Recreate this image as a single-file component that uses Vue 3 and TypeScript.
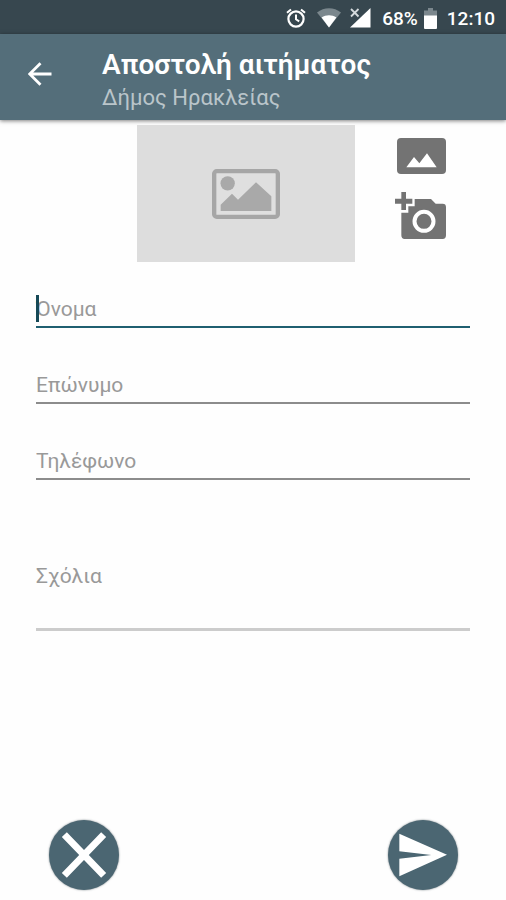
<script setup lang="ts">
import { ref } from 'vue'

interface Field {
  id: string
  label: string
  type: string
}

const fields: Field[] = [
  { id: 'first-name', label: 'Όνομα', type: 'text' },
  { id: 'last-name', label: 'Επώνυμο', type: 'text' },
  { id: 'phone', label: 'Τηλέφωνο', type: 'tel' },
]

const values = ref<Record<string, string>>({ 'first-name': '', 'last-name': '', phone: '' })
const comments = ref('')
const active = ref('first-name')
</script>

<template>
  <div class="screen">
    <div class="status">
      <svg class="alarm" viewBox="0 0 20 20" aria-hidden="true">
        <circle cx="10" cy="11" r="7.6" fill="none" stroke="#fff" stroke-width="2.2" />
        <path d="M10 6.5V11.3L13.2 13.3M1 4.8L5 1.4M19 4.8L15 1.4" fill="none" stroke="#fff" stroke-width="2" />
      </svg>
      <svg class="wifi" viewBox="0 0 24 20" aria-hidden="true">
        <path d="M0 4.5C7-1.2 17-1.2 24 4.5L12 19.5Z" fill="#7b878d" />
        <path d="M4.6 9.6C9 6.4 15 6.4 19.4 9.6L12 19.5Z" fill="#fff" />
      </svg>
      <svg class="signal" viewBox="0 0 21 20" aria-hidden="true">
        <path d="M20.5 0V19.5H0Z" fill="#fff" />
        <path d="M1 1L8.5 8.5M8.5 1L1 8.5" stroke="#37474f" stroke-width="5" />
        <path d="M1 1L8.5 8.5M8.5 1L1 8.5" stroke="#d5dadd" stroke-width="1.8" />
      </svg>
      <span class="percent">68%</span>
      <svg class="battery" viewBox="0 0 13 21" aria-hidden="true">
        <path d="M4 0H9V2.5H13V8H0V2.5H4Z" fill="#7b878d" />
        <path d="M0 7.5H13V20Q13 21 12 21H1Q0 21 0 20Z" fill="#fff" />
      </svg>
      <span class="clock">12:10</span>
    </div>

    <header class="bar">
      <button class="back" type="button" aria-label="Πίσω">
        <svg viewBox="0 0 24 24" aria-hidden="true">
          <path d="M23.5 12H2M12.5 1.2L1.7 12L12.5 22.8" fill="none" stroke="#fff" stroke-width="2.8" />
        </svg>
      </button>
      <div class="heading">
        <h1>Αποστολή αιτήματος</h1>
        <p>Δήμος Ηρακλείας</p>
      </div>
    </header>

    <form class="form" @submit.prevent>
      <div class="media">
        <div class="preview">
          <svg viewBox="0 0 204 150" aria-hidden="true">
            <rect x="6.5" y="6.5" width="191" height="137" rx="8" fill="#dfdfdf" stroke="#a6a6a6" stroke-width="13" />
            <circle cx="47" cy="43" r="21.5" fill="#a9a9a9" />
            <path d="M26 126V107L60 74L78 92L132 40L178 82V126Z" fill="#a9a9a9" />
          </svg>
        </div>
        <div class="sources">
          <button type="button" aria-label="Επιλογή εικόνας">
            <svg class="gallery" viewBox="0 0 147 108" aria-hidden="true">
              <rect width="147" height="108" rx="12" fill="#737373" />
              <path d="M28 88L51 57L67 76L90 46L119 88Z" fill="#fff" />
            </svg>
          </button>
          <button type="button" aria-label="Λήψη φωτογραφίας">
            <svg class="camera" viewBox="45 200 153 144" aria-hidden="true">
              <path d="M64 200H78V220H97V235H78V254H64V235H45V220H64Z" fill="#737373" />
              <path d="M64 262H85V243H104V221H153L167 235H188Q198 235 198 245V330Q198 341 188 341H74Q64 341 64 330Z" fill="#737373" />
              <circle cx="132" cy="288" r="28.5" fill="#737373" stroke="#fff" stroke-width="12" />
            </svg>
          </button>
        </div>
      </div>

      <div v-for="field in fields" :key="field.id" class="field" :class="{ active: active === field.id }">
        <input :id="field.id" v-model="values[field.id]" :type="field.type" @focus="active = field.id" />
        <label v-show="!values[field.id]" :for="field.id">{{ field.label }}</label>
        <span v-if="active === field.id && !values[field.id]" class="caret"></span>
      </div>

      <div class="field comments">
        <textarea id="comments" v-model="comments" rows="2" @focus="active = 'comments'"></textarea>
        <label v-show="!comments" for="comments">Σχόλια</label>
      </div>

      <div class="actions">
        <button class="round" type="button" aria-label="Ακύρωση">
          <svg viewBox="0 0 210 210" aria-hidden="true">
            <path d="M46 44L164 166M164 44L46 166" stroke="#fff" stroke-width="21" />
          </svg>
        </button>
        <button class="round" type="submit" aria-label="Αποστολή">
          <svg viewBox="0 0 210 210" aria-hidden="true">
            <path d="M34 41L177 104L34 169V116L130 105L34 94Z" fill="#fff" />
          </svg>
        </button>
      </div>
    </form>
  </div>
</template>

<style>
body {
  margin: 0;
  background: #fefefe;
}
</style>

<style scoped>
.screen {
  display: flex;
  flex-direction: column;
  min-height: 100vh;
  font-family: Roboto, "Noto Sans", sans-serif;
}

svg {
  display: block;
}

button {
  padding: 0;
  border: 0;
  background: none;
  cursor: pointer;
}

.status {
  display: flex;
  align-items: center;
  justify-content: flex-end;
  height: 34px;
  box-sizing: border-box;
  padding: 2px 11px 0 0;
  background: #37474f;
  color: #fff;
  font-size: 19px;
  font-weight: 500;
}

.alarm {
  width: 20px;
  height: 20px;
  margin-right: 11px;
}

.wifi {
  width: 24px;
  height: 20px;
  margin-right: 9px;
}

.signal {
  width: 21px;
  height: 20px;
  margin-right: 11px;
}

.percent {
  margin-right: 6px;
}

.battery {
  width: 13px;
  height: 21px;
  margin-right: 10px;
}

.bar {
  display: flex;
  height: 86px;
  background: #546e7a;
  box-shadow: 0 1px 4px rgba(0, 0, 0, 0.5);
}

.back {
  width: 80px;
  height: 80px;
  display: grid;
  place-items: center;
}

.back svg {
  width: 24px;
  height: 24px;
}

.heading {
  padding: 12px 0 0 22px;
}

h1,
p {
  margin: 0;
  white-space: nowrap;
}

h1 {
  color: #fff;
  font-size: 28px;
  line-height: 38px;
  font-weight: 600;
}

p {
  color: #bac5ca;
  font-size: 22px;
  line-height: 28px;
}

.form {
  display: flex;
  flex: 1;
  flex-direction: column;
  padding: 5px 36px 10px;
}

.media {
  display: flex;
  justify-content: flex-end;
  gap: 42px;
  padding-right: 24px;
  margin-bottom: 28px;
}

.preview {
  display: grid;
  place-items: center;
  width: 218px;
  height: 137px;
  background: #dddddd;
}

.preview svg {
  width: 68px;
  height: 50px;
}

.sources {
  display: flex;
  flex-direction: column;
  align-items: flex-end;
  gap: 18px;
  width: 49px;
  padding-top: 13px;
}

.gallery {
  width: 49px;
  height: 36px;
}

.camera {
  width: 51px;
  height: 48px;
}

.field {
  position: relative;
  margin-bottom: 38px;
}

input,
textarea {
  display: block;
  width: 100%;
  box-sizing: border-box;
  padding: 5px 0 0;
  border: 0;
  border-bottom: 2px solid #8c8c8c;
  outline: 0;
  background: none;
  color: #333;
  font-family: inherit;
  font-size: 21px;
  line-height: 28px;
  resize: none;
}

input {
  height: 38px;
}

.active input {
  border-color: #1f5f70;
}

textarea {
  height: 70px;
  padding-top: 1px;
  border-bottom: 3px solid #cccccc;
}

.comments {
  margin: 43px 0 0;
}

label {
  position: absolute;
  top: 5px;
  left: 0;
  color: #999;
  font-size: 21px;
  line-height: 28px;
  cursor: text;
}

.comments label {
  top: 1px;
}

.caret {
  position: absolute;
  left: 0;
  top: 5px;
  width: 3px;
  height: 27px;
  background: #164957;
}

.actions {
  display: flex;
  justify-content: space-between;
  margin-top: auto;
  padding: 0 12px 0 13px;
}

.round {
  width: 70px;
  height: 70px;
  border-radius: 50%;
  background: #4b6672;
  box-shadow: 0 0 2px rgba(55, 71, 79, 0.7);
}

.round svg {
  width: 70px;
  height: 70px;
}
</style>
